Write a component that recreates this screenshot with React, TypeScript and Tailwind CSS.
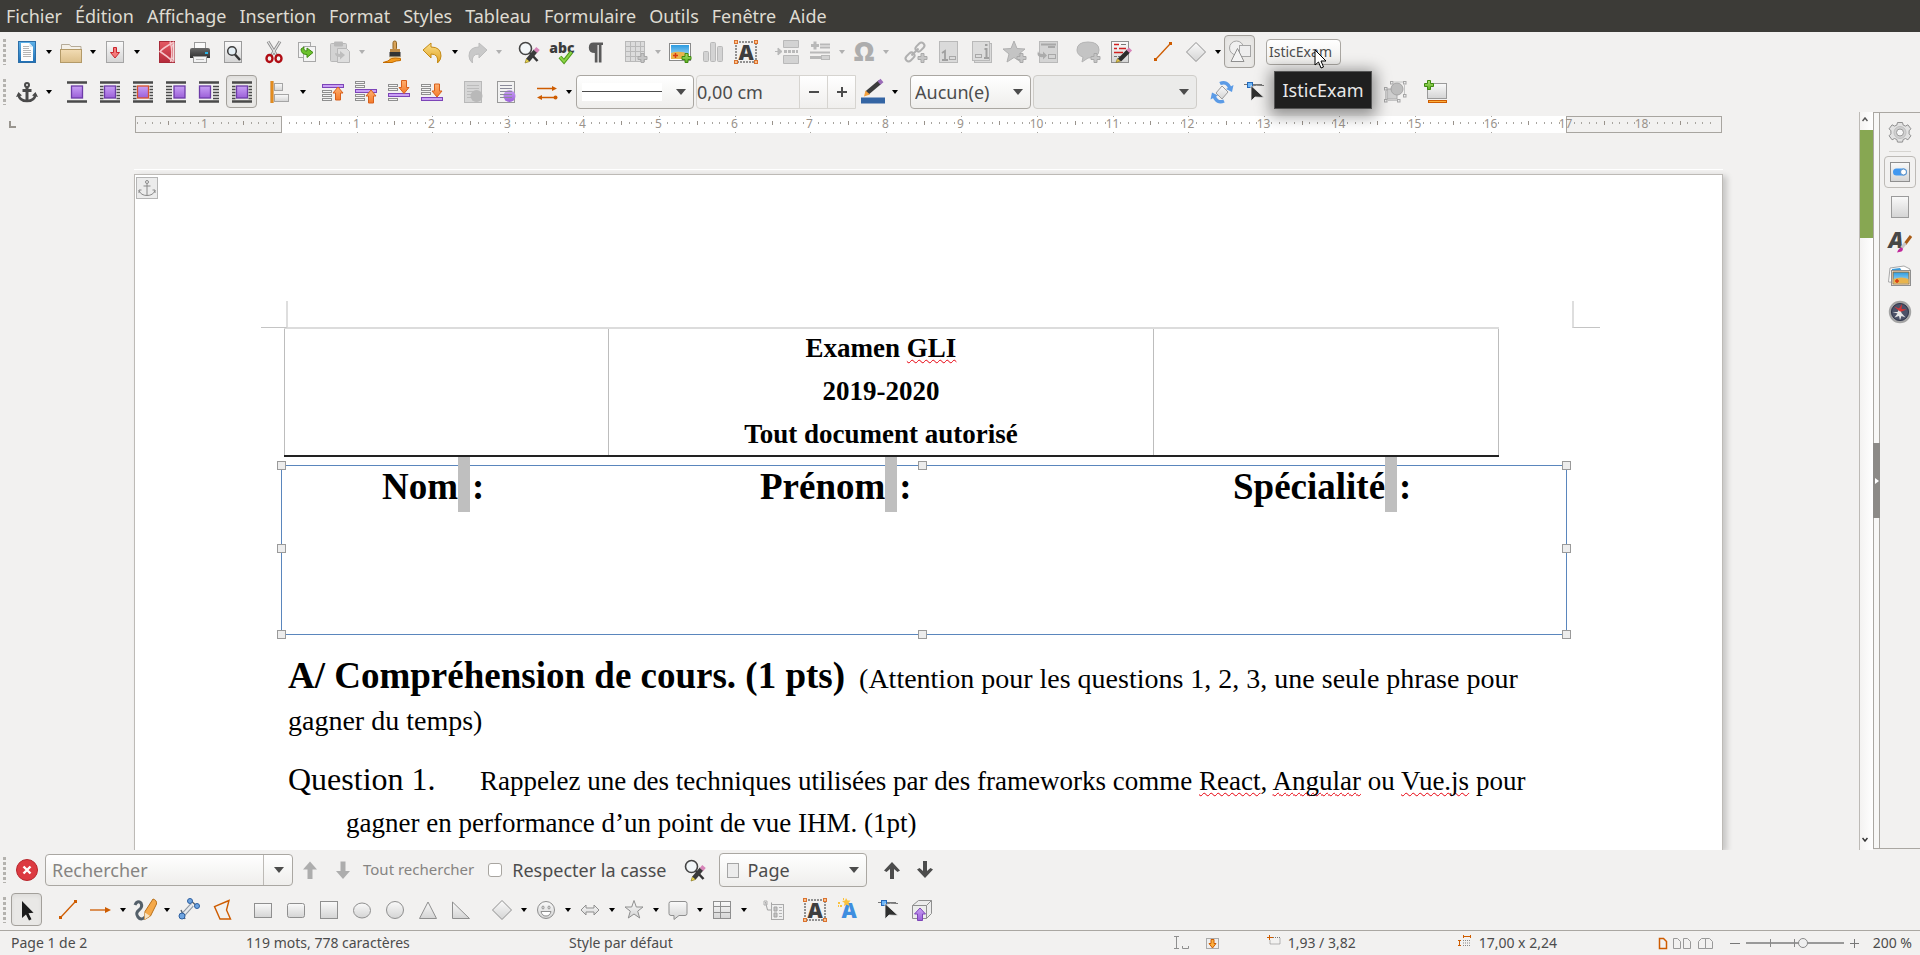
import React from "react";

type Kids = { children?: React.ReactNode };

/* ---------- shared gradients ---------- */
function Defs() {
  const grad = (id: string, a: string, b: string) => (
    <linearGradient id={id} x1="0" y1="0" x2="0" y2="1">
      <stop offset="0" stopColor={a} />
      <stop offset="1" stopColor={b} />
    </linearGradient>
  );
  return (
    <svg className="absolute size-0" aria-hidden="true">
      <defs>
        {grad("gGray", "#fafafa", "#d4d4d4")}
        {grad("gBlue", "#5fb2e8", "#1f6fb5")}
        {grad("gPurple", "#c9a0f5", "#9b5fd8")}
        {grad("gOrange", "#ffb070", "#f47a2a")}
        {grad("gFolder", "#f2dcb4", "#dcbf8a")}
        {grad("gRed", "#e45a63", "#b52a3a")}
        {grad("gGold", "#fbe08a", "#e0a020")}
        {grad("gSky", "#2c9be0", "#bfe6fa")}
        {grad("gDark", "#6a6a6a", "#303030")}
        {grad("gGreen", "#a8e070", "#5cae1c")}
      </defs>
    </svg>
  );
}

function Ic({ children }: Kids) {
  return (
    <svg viewBox="0 0 24 24" className="size-6 shrink-0 overflow-visible" fill="none" aria-hidden="true">
      {children}
    </svg>
  );
}

const D = "#b9b9b9";
const DF = "#d3d3d3";
const G = "#8f8f8f";
const K = "#4a4a4a";
const O = "#ce5c00";

const plus = (x: number, y: number, on: boolean) => (
  <path
    d={`M${x + 3} ${y}h3v3h3v3h-3v3h-3v-3h-3v-3h3z`}
    fill={on ? "url(#gGreen)" : "#c6c6c6"}
    stroke={on ? "#3f8a10" : "#a9a9a9"}
    strokeWidth="1"
  />
);

const upArrow = (x: number, y: number) => (
  <path d={`M${x} ${y}l5 6h-2.5v7h-5v-7h-2.5z`} fill="url(#gOrange)" stroke="#d8601c" />
);
const downArrow = (x: number, y: number) => (
  <path d={`M${x} ${y + 13}l5 -6h-2.5v-7h-5v7h-2.5z`} fill="url(#gOrange)" stroke="#d8601c" />
);

const textLines = (x: number, w: number, ys: number[], c: string) =>
  ys.map((y) => <path key={y} d={`M${x} ${y}h${w}`} stroke={c} />);

const slabs = (ys: number[]) =>
  ys.map((y) => <rect key={y} x="1.5" y={y} width="9" height="2" fill="#f4f4f4" stroke="#8f8f8f" />);

const icons = {
  newDoc: (
    <>
      <rect x="3.5" y="1.5" width="17" height="21" fill="url(#gBlue)" stroke="#2d6fa8" />
      <path d="M6 3h8.5l3.5 4v14H6z" fill="#fdfdfd" />
      <path d="M14.5 3v4h3.5z" fill="#cfe4f4" />
      {textLines(8, 6, [6.5, 8.5], "#b5b5b5")}
      {textLines(8, 8, [10.5, 12.5, 14.5, 16.5], "#b5b5b5")}
    </>
  ),
  open: (
    <>
      <path d="M2.5 22V4.5h8l1.5 2h10V22" fill="#f4f0e8" stroke="#b5ab98" />
      <rect x="1.5" y="9.5" width="21" height="13" fill="url(#gFolder)" stroke="#b39a68" />
    </>
  ),
  save: (
    <>
      <rect x="3.5" y="1.5" width="17" height="21" fill="url(#gGray)" stroke="#a5a5a5" />
      <path d="M10.5 7.5h3v5h3L12 18l-4.5 -5.5h3z" fill="#f47a7a" stroke="#c9252d" />
    </>
  ),
  pdf: (
    <>
      <rect x="4.5" y="1.5" width="15" height="21" fill="url(#gRed)" stroke="#a82a38" />
      <path d="M19 2Q8 8 5 11.5Q12 16 18.500 22M15 1.500Q18.500 12 15.500 22" stroke="#f6c6ca" strokeWidth="1.5" />
      <path d="M17 5q2 7 0 14l2.500 3V2z" fill="#f0dcdc" />
    </>
  ),
  print: (
    <>
      <rect x="6.5" y="2.5" width="11" height="7" fill="#fafafa" stroke="#9b9b9b" />
      <path d="M2 10q0 -2 2 -2h16q2 0 2 2v8H2z" fill="url(#gDark)" />
      <rect x="17" y="12" width="3" height="2" fill="#29b6e8" />
      <rect x="5.5" y="16.5" width="13" height="6" fill="#f2f2f2" stroke="#9b9b9b" />
      <path d="M8 19.5h8" stroke="#bbb" />
    </>
  ),
  preview: (
    <>
      <rect x="3.5" y="1.5" width="17" height="21" fill="url(#gGray)" stroke="#9b9b9b" />
      <circle cx="11" cy="11" r="4.3" fill="#e4eef4" stroke="#3c3c3c" strokeWidth="1.5" />
      <path d="M14 14.5l5 5.5" stroke="#333" strokeWidth="2.5" />
    </>
  ),
  cut: (
    <>
      <path d="M6 1.5L15 16M18 1.5L9 16" stroke="#8d8d8d" strokeWidth="3" />
      <path d="M6 1.5L15 16M18 1.5L9 16" stroke="#e6e6e6" strokeWidth="1.2" />
      <ellipse cx="7.5" cy="18.5" rx="3" ry="3.5" stroke="#b00d14" strokeWidth="2.4" />
      <ellipse cx="16.5" cy="18.5" rx="3" ry="3.5" stroke="#b00d14" strokeWidth="2.4" />
    </>
  ),
  copy: (
    <>
      <rect x="3.5" y="2.5" width="12" height="15" fill="#f4f4f4" stroke="#a8a8a8" />
      <rect x="8.5" y="6.5" width="12" height="15" fill="#f4f4f4" stroke="#a8a8a8" />
      <path d="M6 9q0 5.5 6 5.5v3l6 -5l-6 -4.5v3q-4 0 -3 -4z" fill="#6cc22e" stroke="#3f8a10" />
    </>
  ),
  paste: (
    <>
      <rect x="2.5" y="3.5" width="16" height="18" rx="1" fill={DF} stroke={D} />
      <rect x="6" y="1.5" width="9" height="5" rx="1" fill={D} />
      <path d="M9.5 8.5h9l3 3v11h-12z" fill="#dedede" stroke={D} />
      <path d="M7 13q0 4 5 4v2.5l5 -4.5l-5 -4v3z" fill="#bdbdbd" />
    </>
  ),
  brush: (
    <>
      <rect x="13" y="1" width="3.5" height="9" rx="1.7" fill="#d9a35a" stroke="#8f6420" />
      <rect x="10" y="9" width="10" height="3.5" fill="#bd8a48" />
      <rect x="9.5" y="12" width="11" height="5" fill="#333" />
      <path d="M9.5 16.5h11V21H9.5z" fill="#ead2a4" />
      <path d="M3 22.5h9q4 -2 8.5 -2v-2q-6 -1 -9 0q-3 3 -8.5 4z" fill="#f39a1e" stroke="#c46c00" />
    </>
  ),
  undo: (
    <path d="M2 10L10 3v4q10 0 10 9q0 4 -3.5 7q1.5 -9 -6.5 -9v4z" fill="url(#gGold)" stroke="#c48a14" />
  ),
  redo: (
    <path d="M22 10L14 3v4q-10 0 -10 9q0 4 3.5 7q-1.5 -9 6.5 -9v4z" fill="#c9c9c9" stroke="#bdbdbd" />
  ),
  find: (
    <>
      <circle cx="8.5" cy="8.5" r="6" fill="#f2f6f8" stroke="#444" strokeWidth="1.6" />
      <path d="M13 13l7.5 8" stroke="#333" strokeWidth="2.5" />
      <path d="M8 23l1.500 -4.500l3 3z" fill="#e8d44c" stroke="#7a6a10" strokeWidth=".6" />
      <path d="M11 20L18.5 11" stroke="#3a3a3a" strokeWidth="4.5" />
      <path d="M18.500 11.500l2.500 -3" stroke="#d784b8" strokeWidth="4.500" />
    </>
  ),
  spell: (
    <>
      <text x="12" y="12.5" textAnchor="middle" fontFamily="Open Sans, sans-serif" fontSize="14" fontWeight="800" fill="#3c3c3c">
        abc
      </text>
      <path d="M10 17l4 4.5L21.5 12" stroke="#4f9a18" strokeWidth="4" />
      <path d="M10 17l4 4.5L21.5 12" stroke="#8bd346" strokeWidth="2" />
    </>
  ),
  pilcrow: <path d="M10.500 2.500h9.500v2.500h-1.500v17.500h-2.700V5H14.500v17.500h-2.700V13q-6 0 -6 -5.200T10.500 2.500z" fill="#5a5a5a" />,
  table: (
    <>
      <rect x="1.5" y="1.5" width="19" height="20" fill="#dcdcdc" stroke={D} />
      <path d="M1.5 6.5h19M1.5 11.5h19M1.5 16.5h19M6.5 1.5v20M11.5 1.5v20M16.5 1.5v20" stroke={D} />
      {plus(14, 13.5, false)}
    </>
  ),
  image: (
    <>
      <rect x="1.5" y="3.5" width="21" height="17" fill="#fff" stroke="#8a8a8a" />
      <rect x="3" y="5" width="18" height="14" fill="url(#gSky)" />
      <path d="M3 13q8 -3 18 1v5H3z" fill="#e9b44c" />
      <path d="M5 15.5h5M7.5 13v5" stroke="#d93a10" strokeWidth="1.5" />
      {plus(14, 13.5, true)}
    </>
  ),
  chart: (
    <>
      <rect x="2.5" y="11.5" width="5" height="10" rx="1" fill={DF} stroke={D} />
      <rect x="9.5" y="2.5" width="5" height="19" rx="1" fill={DF} stroke={D} />
      <rect x="16.5" y="6.5" width="5" height="15" rx="1" fill={DF} stroke={D} />
    </>
  ),
  textBox: (
    <>
      <rect x="2" y="2" width="20" height="20" stroke="#333" strokeDasharray="2 1" />
      <text x="12" y="19.5" textAnchor="middle" fontFamily="Open Sans, sans-serif" fontSize="21" fontWeight="800" fill="#3e3e3e">
        A
      </text>
      {[0.5, 20.5].map((x) =>
        [0.5, 20.5].map((y) => (
          <rect key={`${x}-${y}`} x={x} y={y} width="3" height="3" fill="#fcc08a" stroke="#d9722f" />
        )),
      )}
    </>
  ),
  pageBreak: (
    <>
      <path d="M8.5 0.5h15v7h-15zM8.5 15.5h15v8h-15z" fill={DF} stroke={D} />
      <path d="M9 11.5h14" stroke={D} strokeWidth="3" strokeDasharray="3 1" />
      <path d="M0 11.5h4M3 8l4 3.5L3 15z" fill={D} stroke={D} />
    </>
  ),
  field: (
    <>
      <path d="M3 5.5h8M7 1.5v8" stroke={D} strokeWidth="3" />
      <path d="M12 4.5h10M12 7.5h10M2 12.5h20" stroke={D} strokeWidth="2" />
      <path d="M2 17.5h14" stroke={D} strokeWidth="3" />
      <rect x="13.5" y="15.5" width="8" height="4" fill={DF} stroke={D} />
    </>
  ),
  omega: (
    <text x="12" y="21" textAnchor="middle" fontFamily="Open Sans, sans-serif" fontSize="26" fontWeight="800" fill="#adadad">
      Ω
    </text>
  ),
  link: (
    <>
      <g transform="rotate(-45 11 12)" stroke="#b0b0b0" strokeWidth="2">
        <rect x="-1" y="9" width="10" height="6" rx="3" />
        <rect x="13" y="9" width="10" height="6" rx="3" />
        <path d="M6 12h10" />
      </g>
      {plus(14, 13.5, false)}
    </>
  ),
  footnote: (
    <>
      <rect x="2.5" y="1.5" width="18" height="21" fill="#dadada" stroke={D} />
      <path d="M5 13l3 -2v9M5 20h6" stroke="#a0a0a0" strokeWidth="1.8" />
      <rect x="12.5" y="16.5" width="6" height="3" stroke="#a8a8a8" />
    </>
  ),
  endnote: (
    <>
      <rect x="4.5" y="3.5" width="17" height="19" fill="#dadada" stroke={D} />
      <rect x="2.5" y="1.5" width="17" height="19" fill="#dcdcdc" stroke={D} />
      <path d="M14.500 9h2v9M14 18h5M15 5h2.500" stroke="#a0a0a0" strokeWidth="2" />
      <rect x="5.5" y="14.5" width="6" height="3" stroke="#a8a8a8" />
    </>
  ),
  bookmark: (
    <>
      <path d="M11 1l3 7.5l8 .5l-6 5l2 8l-7 -4.5L4 22l2 -8L0 9l8 -.5z" fill="#c4c4c4" stroke="#b0b0b0" />
      {plus(14, 13.5, false)}
    </>
  ),
  crossRef: (
    <>
      <rect x="3.5" y="1.5" width="18" height="21" fill="#d4d4d4" stroke={D} />
      <path d="M5 4.5h15M12 7h7" stroke="#a8a8a8" strokeWidth="2" />
      <rect x="12.5" y="14.5" width="7" height="4" stroke="#a8a8a8" />
      <path d="M2 11q0 3 5 3v-2.500l4 4l-4 4V17Q0 18 2 11z" fill="#ababab" />
    </>
  ),
  comment: (
    <>
      <path d="M11 2q11 0 11 8t-11 8l-6 4l1 -5Q0 15 0 10q0 -8 11 -8z" fill="#c4c4c4" stroke="#b4b4b4" />
      {plus(14, 13.5, false)}
    </>
  ),
  track: (
    <>
      <rect x="1.5" y="1.5" width="17" height="21" fill="url(#gGray)" stroke="#8f8f8f" />
      <path d="M4 4.5h5M4 8.5h3M9 8.5h7M4 12.5h9" stroke="#d02020" strokeWidth="1.5" />
      <path d="M11 4.5h5M8 16.5h2M4 16.5h3" stroke="#777" />
      <path d="M6 22.5l1.5 -4l3 2.5z" fill="#e8c94c" stroke="#7a6a10" strokeWidth=".6" />
      <path d="M9.5 20L18.5 11" stroke="#2c2c2c" strokeWidth="4.5" />
      <path d="M18 11.5l2.5 -2.5" stroke="#d784b8" strokeWidth="4.5" />
    </>
  ),
  line: (
    <>
      <path d="M5 19L19 4" stroke={O} strokeWidth="1.3" />
      <rect x="3" y="18" width="3" height="3" fill={O} />
      <rect x="18" y="2" width="3" height="3" fill={O} />
    </>
  ),
  arrowLine: (
    <>
      <path d="M1 12h16" stroke={O} strokeWidth="1.3" />
      <path d="M16 9L22 12l-6 3z" fill={O} />
    </>
  ),
  diamond: <path d="M12 2.500L21.5 12L12 21.5L2.5 12z" fill="url(#gGray)" stroke={G} />,
  shapes: (
    <>
      <circle cx="8.5" cy="8" r="7" fill="#f0f0f0" stroke="#a5a5a5" />
      <rect x="11.5" y="5.5" width="11" height="11" fill="#eee" stroke="#a5a5a5" />
      <path d="M9.5 8.5l6.5 13H3z" fill="#f4f4f4" stroke="#8f8f8f" />
    </>
  ),
  anchor: (
    <>
      <circle cx="12" cy="5" r="2" stroke={K} strokeWidth="2" />
      <path d="M12 7v14M7.5 10.500h9" stroke={K} strokeWidth="3" />
      <path d="M3.5 14.5q1 6.500 8.5 6.500t8.5 -6.500" stroke={K} strokeWidth="2.600" />
      <path d="M1 17l2.5 -5L7 15.500zM23 17l-2.5 -5L17 15.500z" fill={K} />
    </>
  ),
  wrapNone: wrapIcon(0),
  wrapPage: wrapIcon(1),
  wrapOptimal: wrapIcon(2),
  wrapLeft: wrapIcon(3),
  wrapRight: wrapIcon(4),
  wrapThrough: wrapIcon(5),
  align: (
    <>
      <rect x="5.5" y="3.5" width="8" height="7" fill="url(#gGray)" stroke="#a5a5a5" />
      <rect x="5.5" y="14.5" width="14" height="7" fill="url(#gGray)" stroke="#a5a5a5" />
      <path d="M3 1v22" stroke="#c96a00" strokeWidth="3" />
      <path d="M3 1v22" stroke="#fcaf3e" />
    </>
  ),
  toFront: (
    <>
      <rect x="1.5" y="4.5" width="21" height="3" fill="#c9a0f5" stroke="#7d45b8" />
      {slabs([10.5, 14.5, 18.5])}
      {upArrow(17, 7)}
    </>
  ),
  forward: (
    <>
      {slabs([1.5, 5.5, 14.5, 18.5])}
      <rect x="1.5" y="9.5" width="21" height="3" fill="#c9a0f5" stroke="#7d45b8" />
      {upArrow(17, 10)}
    </>
  ),
  backward: (
    <>
      {slabs([4.5, 8.5, 18.5])}
      <rect x="1.5" y="13.5" width="21" height="3" fill="#c9a0f5" stroke="#7d45b8" />
      {downArrow(17, 0.5)}
    </>
  ),
  toBack: (
    <>
      {slabs([4.5, 8.5, 12.5])}
      <rect x="1.5" y="17.5" width="21" height="3" fill="#c9a0f5" stroke="#7d45b8" />
      {downArrow(17, 4)}
    </>
  ),
  fgDisabled: (
    <>
      <rect x="3.5" y="1.5" width="17" height="21" fill="#d6d6d6" stroke={D} />
      {textLines(6, 12, [5.5, 8.5, 11.5, 14.5, 17.5], "#bcbcbc")}
      <circle cx="15.5" cy="16" r="6" fill="#b9b9b9" />
    </>
  ),
  background: (
    <>
      <rect x="3.5" y="1.5" width="17" height="21" fill="#f2f2f2" stroke="#999" />
      <circle cx="15.5" cy="16" r="6" fill="url(#gPurple)" />
      {textLines(6, 12, [5.5, 8.5, 11.5, 14.5, 17.5], "#8a8a9a")}
    </>
  ),
  arrows: (
    <>
      <path d="M2 8.5h15M7 17.5h15" stroke={O} strokeWidth="1.5" />
      <path d="M17 6l5 2.500L17 11zM7 15l-5 2.500L7 20z" fill={O} />
      <circle cx="20.5" cy="17.500" r="2" fill={O} />
    </>
  ),
  pencilColor: (
    <>
      <path d="M6 13L19 2" stroke="#3c3c3c" strokeWidth="4.5" />
      <path d="M18 3l3 -2.5" stroke="#9a6bb8" strokeWidth="4.5" />
      <path d="M3 16.5L4.5 10.5L9 14.5z" fill="#f5a13c" />
      <rect x="0" y="17.5" width="24" height="6" fill="#3465a4" />
    </>
  ),
  rotate: (
    <>
      <path d="M12 6l6 6l-6 7l-6 -6z" fill="url(#gGray)" stroke="#9b9b9b" />
      <path d="M10 3.5q7 -3 10 5" stroke="#5b9be6" strokeWidth="3.5" />
      <path d="M23.5 5l-1.5 7l-6 -3z" fill="#5b9be6" />
      <path d="M14 21q-7 3 -10 -5" stroke="#5b9be6" strokeWidth="3.5" />
      <path d="M.5 19.5l1.5 -7l6 3z" fill="#5b9be6" />
    </>
  ),
  points: (
    <>
      <path d="M1 4.5h18M5 6.5q9 -2 16 -1" stroke="#777" />
      <rect x="4.5" y="2.5" width="5" height="5" fill="#6db6f8" stroke="#2468b8" />
      <path d="M8 5.500v15.500l4 -4l9 .5z" fill="#2f2f2f" stroke="#eee" strokeWidth=".8" />
    </>
  ),
  group: (
    <>
      <rect x="4" y="9" width="10" height="10" fill="#cfcfcf" stroke="#a9a9a9" />
      <circle cx="14" cy="9" r="6" fill="#bdbdbd" stroke="#a5a5a5" />
      {[[7, 1], [20, 1], [20, 14], [1, 7], [1, 19], [14, 19]].map(([x, y]) => (
        <rect key={`${x}-${y}`} x={x + 0.5} y={y + 0.5} width="2.5" height="2.5" fill="#eee" stroke="#a5a5a5" />
      ))}
      <path d="M11 2h9M21.5 5v9M2.5 11v8M5 20.5h9" stroke="#c4c4c4" />
    </>
  ),
  caption: (
    <>
      <rect x="3.5" y="3.5" width="19" height="15" fill="url(#gGray)" stroke="#9b9b9b" />
      <rect x="4.5" y="20.5" width="18" height="2" fill="#fcaf3e" stroke={O} />
      {plus(0.5, 0.5, true)}
    </>
  ),
  cursor: <path d="M7 3v17l4 -3.5l3 6l2.5 -1.2l-3 -6l5 -.5z" fill="#1c1c1c" />,
  freehand: (
    <>
      <path d="M2 7q2 -5 6 -2q2 4 -2 7t-1 7q3 4 7 0" stroke="#54606a" strokeWidth="3" />
      <path d="M20 1q4 1 3.500 5l-6 12l-6 3.500l.5 -8z" fill="#f5a94a" stroke="#b8701a" />
      <path d="M12 14.500l-.5 7l5.500 -3.500z" fill="#f6e3c4" />
    </>
  ),
  curve: (
    <>
      <path d="M5 18L15 7" stroke="#8b95a0" strokeWidth="4.500" />
      <path d="M5 18L15 7" stroke="#e8ebee" strokeWidth="2.500" />
      <path d="M4 12l4 9M13 2l8 7" stroke="#5a6570" strokeWidth="1.500" />
      <circle cx="5" cy="18" r="3" fill="#6ea4e0" stroke="#2d5fa0" />
      <circle cx="13" cy="3" r="2.500" fill="#6ea4e0" stroke="#2d5fa0" />
      <circle cx="20" cy="8" r="2.500" fill="#6ea4e0" stroke="#2d5fa0" />
    </>
  ),
  polygon: <path d="M19 2.5L4.500 8.500l5.500 12.500h10.500L16.500 12z" stroke={O} strokeWidth="1.4" />,
  rect: <rect x="3.5" y="5.5" width="17" height="14" fill="url(#gGray)" stroke={G} />,
  roundRect: <rect x="3.5" y="5.5" width="17" height="14" rx="2" fill="url(#gGray)" stroke={G} />,
  square: <rect x="3.5" y="3.5" width="17" height="17" fill="url(#gGray)" stroke={G} />,
  ellipse: <ellipse cx="12" cy="12.500" rx="8.5" ry="7.500" fill="url(#gGray)" stroke={G} />,
  circle: <circle cx="12" cy="12" r="8.5" fill="url(#gGray)" stroke={G} />,
  triangle: <path d="M12 4l8.5 16.5h-17z" fill="url(#gGray)" stroke={G} />,
  rightTriangle: <path d="M3.5 4v16.5h17z" fill="url(#gGray)" stroke={G} />,
  smiley: (
    <>
      <circle cx="12" cy="12" r="8.5" fill="url(#gGray)" stroke={G} />
      <ellipse cx="9" cy="9.5" rx="1" ry="1.5" stroke={G} />
      <ellipse cx="15" cy="9.5" rx="1" ry="1.5" stroke={G} />
      <path d="M7 13.5h10q-1 4.5 -5 4.5t-5 -4.5z" fill="#fff" stroke={G} />
    </>
  ),
  doubleArrow: <path d="M3 12l5 -5v3h8v-3l5 5l-5 5v-3H8v3z" fill="url(#gGray)" stroke={G} />,
  star: <path d="M12 2.5l2.3 6.5h6.7l-5.3 4.2l2 6.8l-5.7 -4l-5.7 4l2 -6.8L3 9h6.7z" fill="url(#gGray)" stroke={G} />,
  callout: <path d="M5 3.5h14q2 0 2 2v10q0 2 -2 2h-6l-5 4v-4H5q-2 0 -2 -2v-10q0 -2 2 -2z" fill="url(#gGray)" stroke={G} />,
  flowchart: (
    <>
      <rect x="3.5" y="3.5" width="17" height="17" fill="url(#gGray)" stroke={G} />
      <path d="M10.5 3.5v17M3.5 8.500h17M3.5 14.500h17" stroke={G} />
    </>
  ),
  legend: (
    <>
      <path d="M3.5 4l2 8h5M9.5 4.5v8" stroke="#a0a0a0" />
      <path d="M2 3h3v4H2z" stroke="#b0b0b0" />
      <rect x="9.5" y="6.5" width="12" height="15" fill="#efefef" stroke="#aaa" />
      <path d="M12 9h3v4h-3zM12 15h3v4h-3z" fill="#c4c4c4" stroke="#a5a5a5" />
      <path d="M17 9.5h3M17 12.5h3M17 15.5h3M17 18.5h3" stroke="#b5b5b5" />
    </>
  ),
  fontwork: (
    <>
      <text x="13" y="20" textAnchor="middle" fontFamily="Open Sans, sans-serif" fontSize="21" fontWeight="800" fill="#3f8ee0">
        A
      </text>
      <path d="M10 0l1.5 2.5l3 0l-2 2.5l1 3l-3 -1.5L8 8l.5 -3L6 3l3 -.5z" fill="#fcc23e" />
      <path d="M2 5h2M4 8h2M2 8h1M7 1h1" stroke="#fcc23e" strokeWidth="2" />
    </>
  ),
  extrude: (
    <>
      <path d="M2.5 7.5l6 -5h13v13l-5 5h-14z" fill="#ececec" stroke="#8f8f8f" />
      <path d="M2.5 7.5h14v13M16.5 7.5l5 -5" stroke="#8f8f8f" />
      <path d="M10 10l5.5 6h-3v6.5h-5V16h-3z" fill="url(#gPurple)" stroke="#7d45b8" />
    </>
  ),
  arrowUpOff: <path d="M12 3.5l7 8h-4.5v9.5h-5v-9.5H5z" fill="#adadad" />,
  arrowDownOff: <path d="M12 21l7 -8h-4.5V3.5h-5V13H5z" fill="#adadad" />,
  arrowUp: <path d="M12 4l8 8.5l-2.5 1.5l-3.5 -3v10h-4v-10l-3.5 3l-2.5 -1.5z" fill="#4c4c4c" />,
  arrowDown: <path d="M12 20l8 -8.5l-2.5 -1.5l-3.5 3v-10h-4v10l-3.5 -3l-2.5 1.5z" fill="#4c4c4c" />,
  close: (
    <>
      <circle cx="12" cy="12" r="10.5" fill="#dc3a41" stroke="#b8262c" />
      <path d="M8.500 8.500l7 7M15.500 8.500l-7 7" stroke="#fff" strokeWidth="2.4" />
    </>
  ),
  gear: (
    <g stroke="#8f8f8f" fill="#e2e2e2">
      <path d="M9.5 1.5h5l.7 2.6l2.3 1l2.4 -1.3l3 4l-1.8 2v3l1.8 2l-3 4l-2.4 -1.3l-2.3 1l-.7 2.6h-5l-.7 -2.6l-2.3 -1l-2.4 1.3l-3 -4l1.8 -2v-3l-1.8 -2l3 -4l2.4 1.3l2.3 -1z" />
      <circle cx="12" cy="11.5" r="6" fill="#d0d0d0" stroke="#c0c0c0" />
      <circle cx="12" cy="11.5" r="3.5" fill="#f6f6f6" stroke="#999" />
    </g>
  ),
  properties: (
    <>
      <rect x="2.5" y="2.5" width="19" height="19" fill="url(#gGray)" stroke="#8f8f8f" />
      <rect x="5" y="8.5" width="14" height="7" rx="3.5" fill="#3f97f0" />
      <circle cx="15.5" cy="12" r="3" fill="#fff" stroke="#5a8fc4" />
    </>
  ),
  page: <rect x="3.5" y="1.5" width="17" height="21" fill="url(#gGray)" stroke="#9b9b9b" />,
  styles: (
    <>
      <text x="8" y="17.500" textAnchor="middle" fontFamily="Open Sans, sans-serif" fontSize="22" fontWeight="800" fontStyle="italic" fill="#474747">
        A
      </text>
      <path d="M17 14l6 -8" stroke="#a85a14" strokeWidth="3" />
      <path d="M13.5 18l4 -5" stroke="#c8c8c8" strokeWidth="3" />
      <path d="M9 22.5q2 -5 5 -5q2 2 -.5 4z" fill="#c0289a" />
    </>
  ),
  gallery: (
    <>
      <path d="M2 3l14 -2l6 3l-2 14L.5 17z" fill="#fff" stroke="#a8a8a8" />
      <path d="M4 4l8 -1l2 3H4z" fill="#3c9ad8" />
      <rect x="3.5" y="5.5" width="19" height="15" fill="#fff" stroke="#8f8f8f" />
      <rect x="5" y="7" width="16" height="12" fill="url(#gSky)" stroke="#9b6b2a" />
      <path d="M5.5 14q8 -3 15 0v4.5h-15z" fill="#e9b44c" />
      <path d="M7 16h4M9 14v4" stroke="#d93a10" strokeWidth="1.5" />
    </>
  ),
  compass: (
    <>
      <circle cx="12" cy="12" r="10" fill="#4c5268" stroke="#a4a4a4" strokeWidth="2.400" />
      <circle cx="12" cy="12" r="8.500" stroke="#2f3448" />
      <path d="M12 8l1.500 5l4 4.500l-4 -1.500l-1.500 4l-1 -4l-4.500 1.500l3 -4l-5 -1.500h5z" fill="#e6e6e6" />
      <path d="M12 11.500L6 6.500l5 2l3 -4.500l-.5 5l5 .5l-5 2z" fill="#d83434" />
    </>
  ),
};

/* Text-wrap icons share the purple object and dark text bars. */
function wrapIcon(kind: number) {
  const bars = [6.5, 9.5, 12.5, 15.5, 18.5];
  return (
    <>
      <path d="M2 2.5h20M2 21.5h20" stroke={K} strokeWidth="2.4" />
      {kind !== 0 &&
        bars.map((y) => {
          if (kind === 3) return <path key={y} d={`M2 ${y}h6`} stroke={K} strokeWidth="1.5" />;
          if (kind === 4) return <path key={y} d={`M16 ${y}h6`} stroke={K} strokeWidth="1.5" />;
          return <path key={y} d={`M2 ${y}h3.5M18.5 ${y}h3.5`} stroke={K} strokeWidth="1.5" />;
        })}
      <rect
        x={kind === 3 ? 10 : kind === 4 ? 2.5 : 6.5}
        y="6"
        width="11"
        height="12"
        fill="url(#gPurple)"
        stroke={kind === 2 ? "#d8502c" : "#6d3ca8"}
        strokeWidth="1.3"
      />
    </>
  );
}

type IconName = keyof typeof icons;

/* ---------- toolbar pieces ---------- */
function Tool({ icon, label, active }: { icon: IconName; label: string; active?: boolean }) {
  return (
    <button
      type="button"
      aria-label={label}
      className={
        active
          ? "mx-px flex h-[33px] w-[31px] shrink-0 items-center justify-center rounded border border-[#a3a09b] bg-[#e9e8e6] shadow-inner"
          : "flex h-[33px] w-[33px] shrink-0 items-center justify-center"
      }
    >
      <Ic>{icons[icon]}</Ic>
    </button>
  );
}

function Drop({ label, off }: { label: string; off?: boolean }) {
  return (
    <button type="button" aria-label={label} className="flex h-[33px] w-[11px] shrink-0 items-center justify-center">
      <svg viewBox="0 0 6 4" className="h-1 w-1.5" aria-hidden="true">
        <path d="M0 0h6L3 4z" fill={off ? "#b0b0b0" : "#000"} />
      </svg>
    </button>
  );
}

const Sep = () => <span className="w-2 shrink-0" />;
const Grip = () => (
  <span className="mr-1 ml-[3px] h-[26px] w-[3px] shrink-0 bg-[repeating-linear-gradient(to_bottom,#b4b2ae_0_3px,transparent_3px_5px)]" />
);

type Item = [IconName, string, ("drop" | "off" | "active")?];

function Tools({ items }: { items: Item[] }) {
  return (
    <>
      {items.map(([icon, label, mode]) => (
        <React.Fragment key={label}>
          <Tool icon={icon} label={label} active={mode === "active"} />
          {(mode === "drop" || mode === "off") && <Drop label={`${label} – options`} off={mode === "off"} />}
        </React.Fragment>
      ))}
    </>
  );
}

function Toolbar({ groups }: { groups: Item[][] }) {
  return (
    <>
      {groups.map((g, i) => (
        <React.Fragment key={i}>
          {i > 0 && <Sep />}
          <Tools items={g} />
        </React.Fragment>
      ))}
    </>
  );
}

const Caret = () => (
  <svg viewBox="0 0 10 6" className="pointer-events-none absolute top-1/2 right-2 h-1.5 w-2.5 -translate-y-1/2" aria-hidden="true">
    <path d="M0 0h10L5 6z" fill="#4c4c4c" />
  </svg>
);

const standard: Item[][] = [
  [["newDoc", "Nouveau", "drop"], ["open", "Ouvrir", "drop"], ["save", "Enregistrer", "drop"]],
  [["pdf", "Exporter en PDF"], ["print", "Imprimer"], ["preview", "Aperçu"]],
  [["cut", "Couper"], ["copy", "Copier"], ["paste", "Coller", "off"]],
  [["brush", "Cloner le formatage"]],
  [["undo", "Annuler", "drop"], ["redo", "Rétablir", "off"]],
  [["find", "Rechercher et remplacer"], ["spell", "Orthographe"], ["pilcrow", "Caractères non imprimables"]],
  [["table", "Tableau", "off"], ["image", "Image"], ["chart", "Diagramme"], ["textBox", "Zone de texte"]],
  [["pageBreak", "Saut de page"], ["field", "Champ", "off"], ["omega", "Caractère spécial", "off"]],
  [["link", "Hyperlien"], ["footnote", "Note de bas de page"], ["endnote", "Note de fin"], ["bookmark", "Repère de texte"], ["crossRef", "Renvoi"]],
  [["comment", "Commentaire"], ["track", "Suivi des modifications"]],
  [["line", "Ligne"], ["diamond", "Formes de base", "drop"], ["shapes", "Fonctions de dessin", "active"]],
];

const drawing: Item[][] = [
  [["cursor", "Sélectionner", "active"]],
  [["line", "Insérer une ligne"], ["arrowLine", "Lignes et flèches", "drop"], ["freehand", "Courbes", "drop"], ["curve", "Courbe"], ["polygon", "Polygone"]],
  [["rect", "Rectangle"], ["roundRect", "Rectangle arrondi"], ["square", "Carré"], ["ellipse", "Ellipse"], ["circle", "Cercle"], ["triangle", "Triangle isocèle"], ["rightTriangle", "Triangle rectangle"]],
  [["diamond", "Losange", "drop"], ["smiley", "Symboles", "drop"], ["doubleArrow", "Flèches pleines", "drop"], ["star", "Étoiles", "drop"], ["callout", "Légendes", "drop"], ["flowchart", "Organigramme", "drop"]],
  [["legend", "Légende"]],
  [["textBox", "Insérer une zone de texte"], ["fontwork", "Fontwork"]],
  [["points", "Points"], ["extrude", "Extrusion"]],
];

function MenuBar() {
  const menus = ["Fichier", "Édition", "Affichage", "Insertion", "Format", "Styles", "Tableau", "Formulaire", "Outils", "Fenêtre", "Aide"];
  return (
    <nav className="flex h-8 shrink-0 items-center gap-[13px] bg-[#3c3b37] px-1.5 text-lg text-[#dfdbd2]">
      {menus.map((m) => (
        <button key={m} type="button">
          {m}
        </button>
      ))}
    </nav>
  );
}

function StandardBar() {
  return (
    <div className="flex h-[39px] shrink-0 items-center">
      <Grip />
      <Toolbar groups={standard} />
      <div className="relative ml-2.5">
        <button
          type="button"
          className="h-[26px] w-[75px] rounded border border-[#aaa7a2] bg-linear-to-b from-white to-[#efeeec] text-left text-sm leading-5 text-[#4c4c4c]"
        >
          <span className="pl-0.5">IsticExam</span>
        </button>
        <svg viewBox="0 0 13 20" className="absolute top-2.5 left-12 z-20 h-5 w-[13px]" aria-hidden="true">
          <path d="M1 1v15l3.5 -3l2.5 6l2.5 -1l-2.5 -6h5z" fill="#fff" stroke="#000" />
        </svg>
        <div role="tooltip" className="absolute top-8 left-2 z-10 flex h-[38px] w-[98px] items-center justify-center border border-[#555] bg-[#1f1f1f] text-lg text-[#e8e8e8] shadow-[0_3px_14px_4px_rgba(0,0,0,0.4)]">
          IsticExam
        </div>
      </div>
    </div>
  );
}

const field = "rounded border border-[#aaa7a2] bg-linear-to-b from-white to-[#efeeec]";

function FrameBar() {
  return (
    <div className="flex h-[41px] shrink-0 items-center text-lg text-[#4c4c4c]">
      <Grip />
      <Tools items={[["anchor", "Ancrer", "drop"]]} />
      <span className="w-1.5 shrink-0" />
      <Tools
        items={[
          ["wrapNone", "Habillage désactivé"],
          ["wrapPage", "Adaptation parallèle"],
          ["wrapOptimal", "Adaptation optimale"],
          ["wrapLeft", "Avant"],
          ["wrapRight", "Après"],
          ["wrapThrough", "Continu", "active"],
        ]}
      />
      <span className="w-1.5 shrink-0" />
      <Tools items={[["align", "Aligner", "drop"]]} />
      <Sep />
      <Toolbar
        groups={[
          [["toFront", "Tout au premier plan"], ["forward", "Avancer d'un plan"], ["backward", "Reculer d'un plan"], ["toBack", "Envoyer à l'arrière"]],
          [["fgDisabled", "Au premier plan"], ["background", "À l'arrière-plan"]],
          [["arrows", "Extrémités de ligne", "drop"]],
        ]}
      />
      <div className="relative ml-0.5">
        <select aria-label="Style de ligne" className={`block h-[34px] w-[118px] appearance-none ${field}`}>
          <option aria-label="Continu" />
        </select>
        <span className="pointer-events-none absolute top-2 left-1.5 flex h-[18px] w-20 items-center bg-white">
          <span className="h-px w-full bg-[#4c4c4c]" />
        </span>
        <Caret />
      </div>
      <div className="ml-0.5 flex h-[34px] w-40 overflow-hidden rounded-l border border-[#d6d4d0]">
        <input aria-label="Largeur de ligne" defaultValue="0,00 cm" className="w-0 flex-1 outline-none" />
        <button type="button" aria-label="Diminuer" className="flex w-7 items-center justify-center border-l border-[#d6d4d0] bg-linear-to-b from-white to-[#f0efed]">
          <span className="h-0.5 w-2.5 bg-[#4c4c4c]" />
        </button>
        <button type="button" aria-label="Augmenter" className="flex w-7 items-center justify-center border-l border-[#d6d4d0] bg-linear-to-b from-white to-[#f0efed]">
          <svg viewBox="0 0 10 10" className="size-2.5" aria-hidden="true">
            <path d="M5 0v10M0 5h10" stroke="#4c4c4c" strokeWidth="2" />
          </svg>
        </button>
      </div>
      <Tools items={[["pencilColor", "Couleur de ligne", "drop"]]} />
      <div className="relative ml-2.5">
        <select aria-label="Remplissage" className={`block h-[34px] w-[121px] appearance-none pl-1 ${field}`}>
          <option>Aucun(e)</option>
        </select>
        <Caret />
      </div>
      <div className="relative ml-0.5">
        <select aria-label="Couleur de remplissage" className="block h-[34px] w-[164px] appearance-none rounded border border-[#cfcdc9] bg-[#ebebea]">
          <option aria-label="Aucune couleur" />
        </select>
        <Caret />
      </div>
      <Sep />
      <Toolbar
        groups={[
          [["rotate", "Rotation"], ["points", "Éditer les points"]],
          [["square", "Alignement"], ["rect", "Répartition"], ["circle", "Dissocier"], ["group", "Grouper"]],
          [["caption", "Insérer une légende"]],
        ]}
      />
    </div>
  );
}

/* ---------- ruler ---------- */
function Ruler() {
  const zero = 147;
  const cm = 75.6;
  const steps = Array.from({ length: 209 }, (_, i) => i - 19);
  return (
    <svg viewBox="0 0 1589 17" className="mx-auto mt-1 h-[17px] w-[1589px] shrink-0" aria-label="Règle">
      <rect x="147" y="0" width="1286" height="17" fill="#fff" />
      <rect x="1.5" y="0.5" width="146" height="16" fill="#f2f1f0" stroke="#a8a5a0" />
      <rect x="1432.5" y="0.5" width="155" height="16" fill="#f2f1f0" stroke="#a8a5a0" />
      {steps.map((k) => {
        const x = Math.round(zero + (k * cm) / 10) + 0.5;
        if (k === 0) return null;
        if (k % 10 === 0)
          return (
            <g key={k}>
              <path d={`M${x} 0v1M${x} 16v1`} stroke="#a8a5a0" />
              <text x={x - 1} y="12" textAnchor="middle" fontFamily="Noto Sans, sans-serif" fontSize="12" fill="#99928b">
                {Math.abs(k / 10)}
              </text>
            </g>
          );
        return k % 5 === 0 ? (
          <path key={k} d={`M${x} 5v4`} stroke="#99928b" />
        ) : (
          <path key={k} d={`M${x} 6v2`} stroke="#a8a5a0" />
        );
      })}
    </svg>
  );
}

/* ---------- document ---------- */
const Misspelled = ({ children }: Kids) => (
  <span className="underline decoration-red-600 decoration-wavy decoration-1 underline-offset-2 [text-decoration-skip-ink:none]">{children}</span>
);

const handles = [
  "-top-[5px] -left-[5px]",
  "-top-[5px] left-1/2 -ml-1.5",
  "-top-[5px] -right-[5px]",
  "top-1/2 -mt-1.5 -left-[5px]",
  "top-1/2 -mt-1.5 -right-[5px]",
  "-bottom-[5px] -left-[5px]",
  "-bottom-[5px] left-1/2 -ml-1.5",
  "-bottom-[5px] -right-[5px]",
];

const FrameField = ({ children }: Kids) => (
  <p className="flex items-start leading-[59px]">
    {children}
    <span className="mr-0.5 h-[55px] w-3 bg-[#bfbfbf]" />:
  </p>
);

function Page() {
  return (
    <article className="relative mx-auto w-[1589px] flex-1 border border-b-0 border-[#bdbab6] bg-white px-[149px] pt-[152px] font-['Liberation_Serif',serif] text-[27px] leading-[42px] text-black shadow-[4px_2px_6px_rgba(0,0,0,0.18)]">
      <span className="absolute top-0.5 left-px flex h-[22px] w-[22px] items-center justify-center border border-[#b5b5b5] bg-[#ececec]">
        <svg viewBox="0 0 18 18" className="size-[18px]" fill="none" stroke="#8a8a8a" aria-hidden="true">
          <circle cx="9" cy="3" r="1.5" />
          <path d="M9 4.5V16M5.5 7h7M1 11.5q2 5 8 5t8 -5M1 14v-3h2.5M17 14v-3h-2.5" />
        </svg>
      </span>
      <span className="absolute top-[126px] left-[126px] h-[27px] w-[27px] border-r-2 border-b border-r-[#dedede] border-b-[#c4c4c4]" />
      <span className="absolute top-[126px] right-[122px] h-[27px] w-7 border-b border-l-2 border-b-[#c4c4c4] border-l-[#dedede]" />

      <table className="w-[1215px] table-fixed border-collapse border-b-2 border-b-[#222] text-center leading-[39px] font-bold">
        <colgroup>
          <col className="w-[324px]" />
          <col className="w-[545px]" />
          <col />
        </colgroup>
        <tbody>
          <tr>
            <td className="border-x border-t-2 border-x-[#bdbdbd] border-t-[#dcdcdc]" />
            <td className="border-x border-t-2 border-x-[#bdbdbd] border-t-[#dcdcdc]">
              <p className="h-[43px]">
                Examen <Misspelled>GLI</Misspelled>
              </p>
              <p className="h-[43px]">2019-2020</p>
              <p className="h-10">Tout document autorisé</p>
            </td>
            <td className="border-x border-t-2 border-x-[#bdbdbd] border-t-[#dcdcdc]" />
          </tr>
        </tbody>
      </table>

      <section className="relative mt-2 -ml-[3px] h-[170px] w-[1286px] border border-[#5a86bd]">
        <div className="relative -mt-[9px] grid grid-cols-[378px_473px_1fr] pl-[100px] text-[37px] font-bold">
          <FrameField>Nom</FrameField>
          <FrameField>Prénom</FrameField>
          <FrameField>Spécialité</FrameField>
        </div>
        {handles.map((h) => (
          <span key={h} className={`absolute size-[9px] border border-[#9a9a9a] bg-[#ededed] ${h}`} />
        ))}
      </section>

      <div className="mt-5 ml-1 w-[1280px]">
        <p className="text-[28px]">
          <strong className="mr-3.5 text-[37px]">A/ Compréhension de cours. (1 pts)</strong>
          (Attention pour les questions 1, 2, 3, une seule phrase pour gagner du temps)
        </p>
        <p className="mt-4 pl-[58px] -indent-[58px]">
          <span className="inline-block w-48 indent-0 text-[32px]">Question 1.</span>
          Rappelez une des techniques utilisées par des frameworks comme <Misspelled>React</Misspelled>, <Misspelled>Angular</Misspelled> ou{" "}
          <Misspelled>Vue.js</Misspelled> pour gagner en performance d’un point de vue IHM. (1pt)
        </p>
      </div>
    </article>
  );
}

function Workspace() {
  return (
    <main className="relative flex min-w-0 flex-1 flex-col overflow-hidden pr-0.5">
      <span className="absolute top-[9px] left-[9px] h-[7px] w-[7px] border-b-2 border-l-2 border-[#99958f]" />
      <Ruler />
      <div className="mx-auto mt-9 mb-1 h-px w-[1589px] shrink-0 bg-white" />
      <Page />
    </main>
  );
}

function Scrollbar() {
  return (
    <div className="flex w-[14px] shrink-0 flex-col items-center border-l border-[#bdbab6] bg-linear-to-r from-[#f4f3f2] to-white">
      <button type="button" aria-label="Défiler vers le haut" className="flex h-[18px] w-full shrink-0 items-center justify-center">
        <svg viewBox="0 0 6 5" className="mr-1 mb-1 h-[5px] w-1.5" fill="none" aria-hidden="true">
          <path d="M0.5 4L3 1l2.5 3" stroke="#555" strokeWidth="1.5" />
        </svg>
      </button>
      <div className="h-[108px] w-full shrink-0 bg-[#87a752]" />
      <div className="flex-1" />
      <button type="button" aria-label="Défiler vers le bas" className="flex h-[22px] w-full shrink-0 items-center justify-center">
        <svg viewBox="0 0 6 5" className="mr-1 h-[5px] w-1.5" fill="none" aria-hidden="true">
          <path d="M0.5 1L3 4l2.5 -3" stroke="#333" strokeWidth="1.5" />
        </svg>
      </button>
    </div>
  );
}

function Sidebar() {
  return (
    <aside className="mb-px flex w-[47px] shrink-0 border-y border-[#aaa7a2]">
      <div className="flex w-[7px] shrink-0 items-center border-x border-[#aaa7a2] bg-[#f8f8f7]">
        <button type="button" aria-label="Masquer le volet" className="-mx-px flex h-[75px] w-[7px] shrink-0 items-center justify-center bg-[#8c8a87]">
          <svg viewBox="0 0 4 6" className="h-1.5 w-1" aria-hidden="true">
            <path d="M0 0l4 3l-4 3z" fill="#fff" />
          </svg>
        </button>
      </div>
      <div className="flex flex-1 flex-col items-center gap-0.5 pt-[3px]">
        <Tool icon="gear" label="Paramètres du volet latéral" />
        <span className="mb-0.5 h-px w-[22px] shrink-0 bg-[#d6d4d0]" />
        <button type="button" aria-label="Propriétés" className="flex h-8 w-8 shrink-0 items-center justify-center rounded border border-[#bdbab6]">
          <Ic>{icons.properties}</Ic>
        </button>
        <Tool icon="page" label="Page du volet" />
        <Tool icon="styles" label="Styles et formatage" />
        <Tool icon="gallery" label="Galerie" />
        <Tool icon="compass" label="Navigateur" />
      </div>
    </aside>
  );
}

function FindBar() {
  return (
    <form className="flex h-[39px] shrink-0 items-center text-lg text-[#4c4c4c]">
      <Grip />
      <Tool icon="close" label="Fermer la barre de recherche" />
      <div className={`ml-0.5 flex h-8 w-[248px] overflow-hidden ${field}`}>
        <input aria-label="Rechercher" placeholder="Rechercher" className="w-0 flex-1 border-r border-[#bdbab6] pl-1.5 outline-none placeholder:text-[#868482]" />
        <button type="button" aria-label="Historique" className="relative w-7">
          <Caret />
        </button>
      </div>
      <Tool icon="arrowUpOff" label="Précédent" />
      <Tool icon="arrowDownOff" label="Suivant" />
      <button type="button" className="mr-3.5 ml-1 text-[15px] text-[#868482]">
        Tout rechercher
      </button>
      <input id="case" type="checkbox" className="size-3.5 appearance-none rounded-[3px] border border-[#a8a5a0] bg-white" />
      <label htmlFor="case" className="pl-2.5">
        Respecter la casse
      </label>
      <span className="w-3" />
      <Tool icon="find" label="Rechercher et remplacer" />
      <div className="relative mx-2">
        <select aria-label="Naviguer par" className={`block h-[34px] w-[148px] appearance-none pl-[27px] ${field}`}>
          <option>Page</option>
        </select>
        <span className="pointer-events-none absolute top-2.5 left-2 h-[15px] w-3 border border-[#a5a5a5] bg-[#ececec]" />
        <Caret />
      </div>
      <Tool icon="arrowUp" label="Page précédente" />
      <Tool icon="arrowDown" label="Page suivante" />
    </form>
  );
}

function StatusBar() {
  return (
    <footer className="flex h-[25px] shrink-0 items-center border-t border-[#aaa7a2] pr-2 pl-[11px] text-sm text-[#4c4c4c]">
      <span className="w-[235px]">Page 1 de 2</span>
      <span className="w-[323px]">119 mots, 778 caractères</span>
      <span className="flex-1">Style par défaut</span>
      <svg viewBox="0 0 16 14" className="h-3.5 w-4" fill="none" stroke="#8f8f8f" aria-hidden="true">
        <path d="M0 .5h5M0 12.5h5M2.5 .5v12M8.5 10v2.5h6V10" />
      </svg>
      <svg viewBox="0 0 13 13" className="ml-4 size-[13px]" aria-hidden="true">
        <rect x=".5" y="1.5" width="12" height="10" fill="#eee" stroke="#aaa" />
        <path d="M5 2.5h3v4h2L6.5 11L3 6.5h2z" fill="#fcaf3e" stroke={O} />
      </svg>
      <svg viewBox="0 0 14 12" className="mb-1 ml-12 h-3 w-3.5" fill="none" aria-hidden="true">
        <path d="M0 2.5h6M2.5 0v5" stroke={O} />
        <path d="M6 2.5h7v6.5H3V5" stroke="#777" strokeDasharray="1 1" />
      </svg>
      <span className="w-[177px] pl-[7px]">1,93 / 3,82</span>
      <svg viewBox="0 0 14 12" className="mb-1 h-3 w-3.5" fill="none" aria-hidden="true">
        <path d="M5 1.5h8M5.5 0v3M12.5 0v3M1.5 5v6M0 5.5h3M0 10.5h3" stroke={O} />
        <path d="M5 5.5h8M5 8h8M5 10.5h8" stroke="#888" strokeDasharray="1 1" />
      </svg>
      <span className="w-[186px] pl-[7px]">17,00 x 2,24</span>
      <svg viewBox="0 0 56 13" className="h-[13px] w-14" fill="none" stroke="#999" aria-hidden="true">
        <path d="M1.5 1.5h4l3 3v7h-7z" stroke={O} strokeWidth="1.5" />
        <path d="M15.5 1.5h4l3 3v7h-7zM25.5 1.5h4l3 3v7h-7zM47.5 11.5h-7v-7l3 -3h4zM47.5 1.5h4l3 3v7h-7z" />
      </svg>
      <button type="button" aria-label="Zoom arrière" className="ml-4 flex h-4 w-2.5 items-center">
        <span className="h-px w-full bg-[#777]" />
      </button>
      <label className="relative mx-1.5 flex h-4 w-[98px] items-center">
        <span className="sr-only">Zoom</span>
        <input
          type="range"
          min="0"
          max="100"
          defaultValue="60"
          className="h-0.5 w-full appearance-none bg-[#999] [&::-webkit-slider-thumb]:size-2.5 [&::-webkit-slider-thumb]:appearance-none [&::-webkit-slider-thumb]:rounded-full [&::-webkit-slider-thumb]:border [&::-webkit-slider-thumb]:border-[#8a8a8a] [&::-webkit-slider-thumb]:bg-[#f0f0f0]"
        />
        <span className="pointer-events-none absolute top-1 left-6 h-2 w-px bg-[#888]" />
        <span className="pointer-events-none absolute top-1 left-12 h-2 w-px bg-[#888]" />
      </label>
      <button type="button" aria-label="Zoom avant" className="flex h-4 w-[9px] items-center">
        <svg viewBox="0 0 9 9" className="size-[9px]" aria-hidden="true">
          <path d="M4.5 0v9M0 4.5h9" stroke="#777" />
        </svg>
      </button>
      <span className="ml-3.5">200 %</span>
    </footer>
  );
}

export default function App() {
  return (
    <div className="flex h-screen flex-col overflow-hidden bg-[#f2f1f0] font-['Noto_Sans',sans-serif] whitespace-nowrap">
      <Defs />
      <MenuBar />
      <StandardBar />
      <FrameBar />
      <div className="flex min-h-0 flex-1 whitespace-normal">
        <Workspace />
        <Scrollbar />
        <Sidebar />
      </div>
      <FindBar />
      <div className="flex h-[41px] shrink-0 items-center">
        <Grip />
        <Toolbar groups={drawing} />
      </div>
      <StatusBar />
    </div>
  );
}
